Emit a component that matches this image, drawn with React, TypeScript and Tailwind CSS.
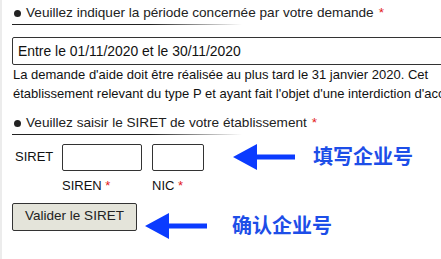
import React from "react";

function Arrow() {
  return (
    <svg width="62" height="26" viewBox="0 0 62 26" className="shrink-0">
      <polygon points="0,13 24,0 24,10.5 62,10.5 62,15.5 24,15.5 24,26" fill="#0b3bff" />
    </svg>
  );
}

function Heading({ children }: { children: React.ReactNode }) {
  return (
    <div className="relative w-fit pl-[2px] pr-1 pb-[2px]">
      <div className="flex items-center text-[13.6px] leading-[16px] text-[#222]">
        <span className="mr-[5px] inline-block h-[7px] w-[7px] rounded-full bg-[#222]" />
        {children}
        <span className="ml-[5px] text-[#e31b1b]">*</span>
      </div>
      <div className="absolute bottom-[-2px] left-0 h-[1.5px] w-[230px] bg-gradient-to-r from-[#222] from-60% to-transparent" />
    </div>
  );
}

export default function App() {
  return (
    <div
      className="h-[259px] w-[441px] overflow-hidden border-l-2 border-[#ececec] bg-white pl-[10px] pt-[5px]"
      style={{ fontFamily: '"Liberation Sans", Arial, "Noto Sans CJK SC", sans-serif' }}
    >
      <Heading>Veuillez indiquer la période concernée par votre demande</Heading>

      <div className="mt-[14px] flex h-[28px] w-[460px] items-center rounded-[2px] border border-[#333] pl-[5px] text-[13.9px] text-[#111]">
        Entre le 01/11/2020 et le 30/11/2020
      </div>

      <p className="mt-0 w-[470px] pl-[1px] text-[13px] leading-[19px] text-[#111] whitespace-nowrap">
        La demande d'aide doit être réalisée au plus tard le 31 janvier 2020. Cet
        <br />
        établissement relevant du type P et ayant fait l'objet d'une interdiction d'accueil
      </p>

      <div className="mt-[12px]">
        <Heading>Veuillez saisir le SIRET de votre établissement</Heading>
      </div>

      <div className="mt-[9px] flex items-center">
        <span className="w-[50px] pl-[3px] text-[13px] text-[#111]">SIRET</span>
        <div className="h-[27px] w-[80px] rounded-[2px] border border-[#333]" />
        <div className="ml-[10px] h-[27px] w-[52px] rounded-[2px] border border-[#333]" />
        <div className="ml-[29px]">
          <Arrow />
        </div>
        <span className="ml-[18px] text-[20px] font-bold text-[#1d4ee8]">填写企业号</span>
      </div>

      <div className="mt-[4px] flex text-[13px] text-[#111]">
        <span className="ml-[50px] w-[90px]">
          SIREN <span className="text-[#e31b1b]">*</span>
        </span>
        <span>
          NIC <span className="text-[#e31b1b]">*</span>
        </span>
      </div>

      <div className="mt-[7px] flex items-start">
        <button className="h-[28px] w-[125px] rounded-[2px] border border-[#333] bg-[#e4e4da] text-[13.5px] text-[#222]">
          Valider le SIRET
        </button>
        <div className="ml-[8px] mt-[10px]">
          <Arrow />
        </div>
        <span className="ml-[25px] mt-[9px] text-[20px] leading-[28px] font-bold text-[#1d4ee8]">确认企业号</span>
      </div>
    </div>
  );
}
